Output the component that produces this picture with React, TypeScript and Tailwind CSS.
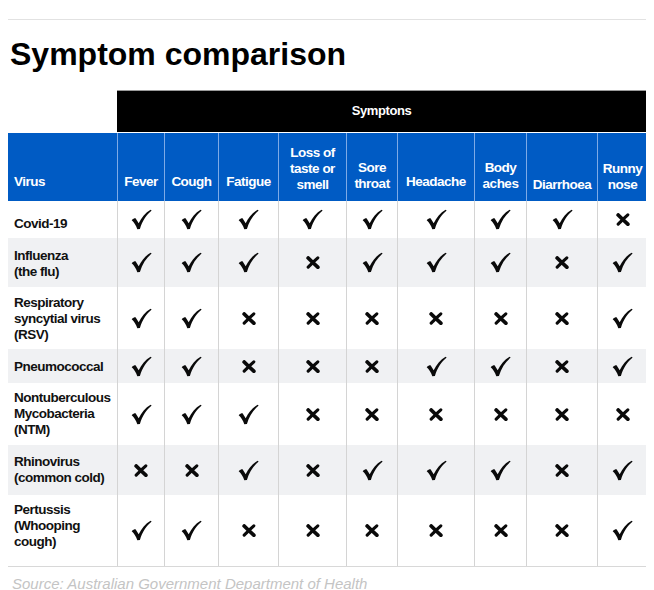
import React from "react";

const headerLabels: { label: React.ReactNode; pb: string }[] = [
  { label: "Fever", pb: "pb-[11px]" },
  { label: "Cough", pb: "pb-[11px]" },
  { label: "Fatigue", pb: "pb-[11px]" },
  { label: <>Loss of<br />taste or<br />smell</>, pb: "pb-[8px]" },
  { label: <>Sore<br />throat</>, pb: "pb-[9px]" },
  { label: "Headache", pb: "pb-[11px]" },
  { label: <>Body<br />aches</>, pb: "pb-[9px]" },
  { label: "Diarrhoea", pb: "pb-[8px]" },
  { label: <>Runny<br />nose</>, pb: "pb-[8px]" },
];

type Row = { name: React.ReactNode; vals: string; h: string; gray: boolean; pad: string };

const rows: Row[] = [
  { name: "Covid-19", vals: "YYYYYYYYN", h: "h-[37px]", gray: false, pad: "pt-[8px]" },
  { name: <>Influenza<br />(the flu)</>, vals: "YYYNYYYNY", h: "h-[49px]", gray: true, pad: "pt-[2px]" },
  { name: <>Respiratory<br />syncytial virus<br />(RSV)</>, vals: "YYNNNNNNY", h: "h-[62px]", gray: false, pad: "pt-[2px]" },
  { name: "Pneumococcal", vals: "YYNNNYYNY", h: "h-[34px]", gray: true, pad: "pt-[2px]" },
  { name: <>Nontuberculous<br />Mycobacteria<br />(NTM)</>, vals: "YYYNNNNNN", h: "h-[62px]", gray: false, pad: "pt-0" },
  { name: <>Rhinovirus<br />(common cold)</>, vals: "NNYNYYYNY", h: "h-[50px]", gray: true, pad: "pt-0" },
  { name: <>Pertussis<br />(Whooping<br />cough)</>, vals: "YYNNNNNNY", h: "h-[71px]", gray: false, pad: "pb-[10px]" },
];

function Check() {
  return (
    <svg width="21" height="21" viewBox="0 0 24 24" className="block">
      <path
        d="M0.8 12.8 C2.4 11.3 3.8 10.6 5.2 10.7 L8.8 16.2 C12 9.8 16.4 4.2 22.4 0.8 L23.6 1.8 C17.8 6.6 12.8 13.6 10.2 22.8 L7.2 23.2 C5.8 18.8 3.6 15.4 0.8 12.8 Z"
        fill="#0a0a0a"
      />
    </svg>
  );
}

function Cross() {
  return (
    <svg width="14" height="13" viewBox="0 0 14 13" className="block">
      <path d="M2.2 2 C5 4.8 8.5 8.2 11.8 11.2" stroke="#0a0a0a" strokeWidth="3.8" strokeLinecap="round" fill="none" />
      <path d="M11.8 1.8 C8.6 4.6 5.2 8.2 2.2 11.2" stroke="#0a0a0a" strokeWidth="3.1" strokeLinecap="round" fill="none" />
    </svg>
  );
}

const gridCols = "grid grid-cols-[109px_47px_54px_60px_68px_51px_77px_52px_71px_50px]";

export default function App() {
  return (
    <div className="w-[654px] h-[590px] overflow-hidden bg-white px-2 pt-[19px] font-['Liberation_Sans',Arial,sans-serif]">
      <div className="border-t border-[#e2e2e2]" />
      <h1 className="mt-[16px] ml-[2px] text-[32px] leading-[36px] font-bold text-black">Symptom comparison</h1>

      <div className="mt-[18px] ml-[109px] h-[42px] bg-black flex items-center justify-center border-t border-[#9a9a9a]">
        <span className="text-white font-bold text-[13px] tracking-[-0.4px] -mt-[2px]">Symptons</span>
      </div>

      <div className={`${gridCols} mt-px bg-[#005bc4] h-[68px] text-white font-bold text-[13.5px] leading-[16px] tracking-[-0.5px]`}>
        <div className="flex items-end pl-[6px] pb-[11px]">Virus</div>
        {headerLabels.map((l, i) => (
          <div key={i} className={`flex items-end justify-center text-center border-l border-[#7eaae6] ${l.pb}`}>
            <div>{l.label}</div>
          </div>
        ))}
      </div>

      {rows.map((r, ri) => (
        <div key={ri} className={`${gridCols} ${r.h} ${r.gray ? "bg-[#f0f1f3]" : "bg-white"}`}>
          <div className={`flex items-center pl-[6px] text-[13.5px] leading-[16px] font-bold tracking-[-0.5px] text-[#111] ${r.pad}`}>
            <div>{r.name}</div>
          </div>
          {r.vals.split("").map((v, i) => (
            <div key={i} className="flex items-center justify-center border-l border-[#d4d4d4]">
              {v === "Y" ? <Check /> : <Cross />}
            </div>
          ))}
        </div>
      ))}
      <div className="border-t border-[#d8d8d8]" />

      <p className="mt-[8px] ml-[4px] text-[15px] leading-[18px] italic text-[#c4c4c4]">
        Source: Australian Government Department of Health
      </p>
    </div>
  );
}
